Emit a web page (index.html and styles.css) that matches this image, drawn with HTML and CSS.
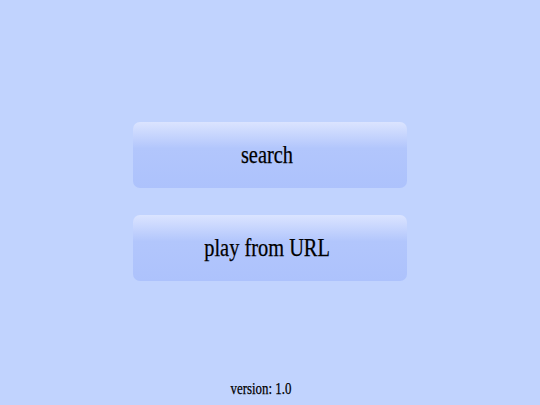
FILE: index.html
```html
<!DOCTYPE html>
<html>
<head>
<meta charset="utf-8">
<link rel="stylesheet" href="styles.css">
</head>
<body>
<div class="screen">
  <div class="menu">
    <div class="btn"><span class="label">search</span></div>
    <div class="btn"><span class="label">play from URL</span></div>
  </div>
  <div class="version"><span class="label">version: 1.0</span></div>
</div>
</body>
</html>
```

FILE: styles.css
```css
html, body {
  margin: 0;
  padding: 0;
  background: #c1d3fe;
}
.screen {
  width: 540px;
  height: 405px;
  display: flex;
  flex-direction: column;
  align-items: center;
  font-family: "Liberation Serif", "Times New Roman", serif;
  color: #000;
}
.menu {
  padding-top: 122px;
  display: flex;
  flex-direction: column;
  gap: 27px;
}
.btn {
  box-sizing: border-box;
  width: 274px;
  height: 66px;
  padding-right: 6px;
  border-radius: 7px;
  background: linear-gradient(to bottom, #dbe4ff 0%, #b2c6fc 40%, #adc2fc 100%);
  display: flex;
  align-items: center;
  justify-content: center;
  font-size: 25px;
}
.label {
  display: inline-block;
  transform: scaleX(0.815);
  -webkit-text-stroke: 0.25px #000;
}
.version {
  margin-top: auto;
  margin-bottom: 6px;
  margin-right: 18px;
  font-size: 16.5px;
}
.version .label {
  transform: scaleX(0.78);
}
```
